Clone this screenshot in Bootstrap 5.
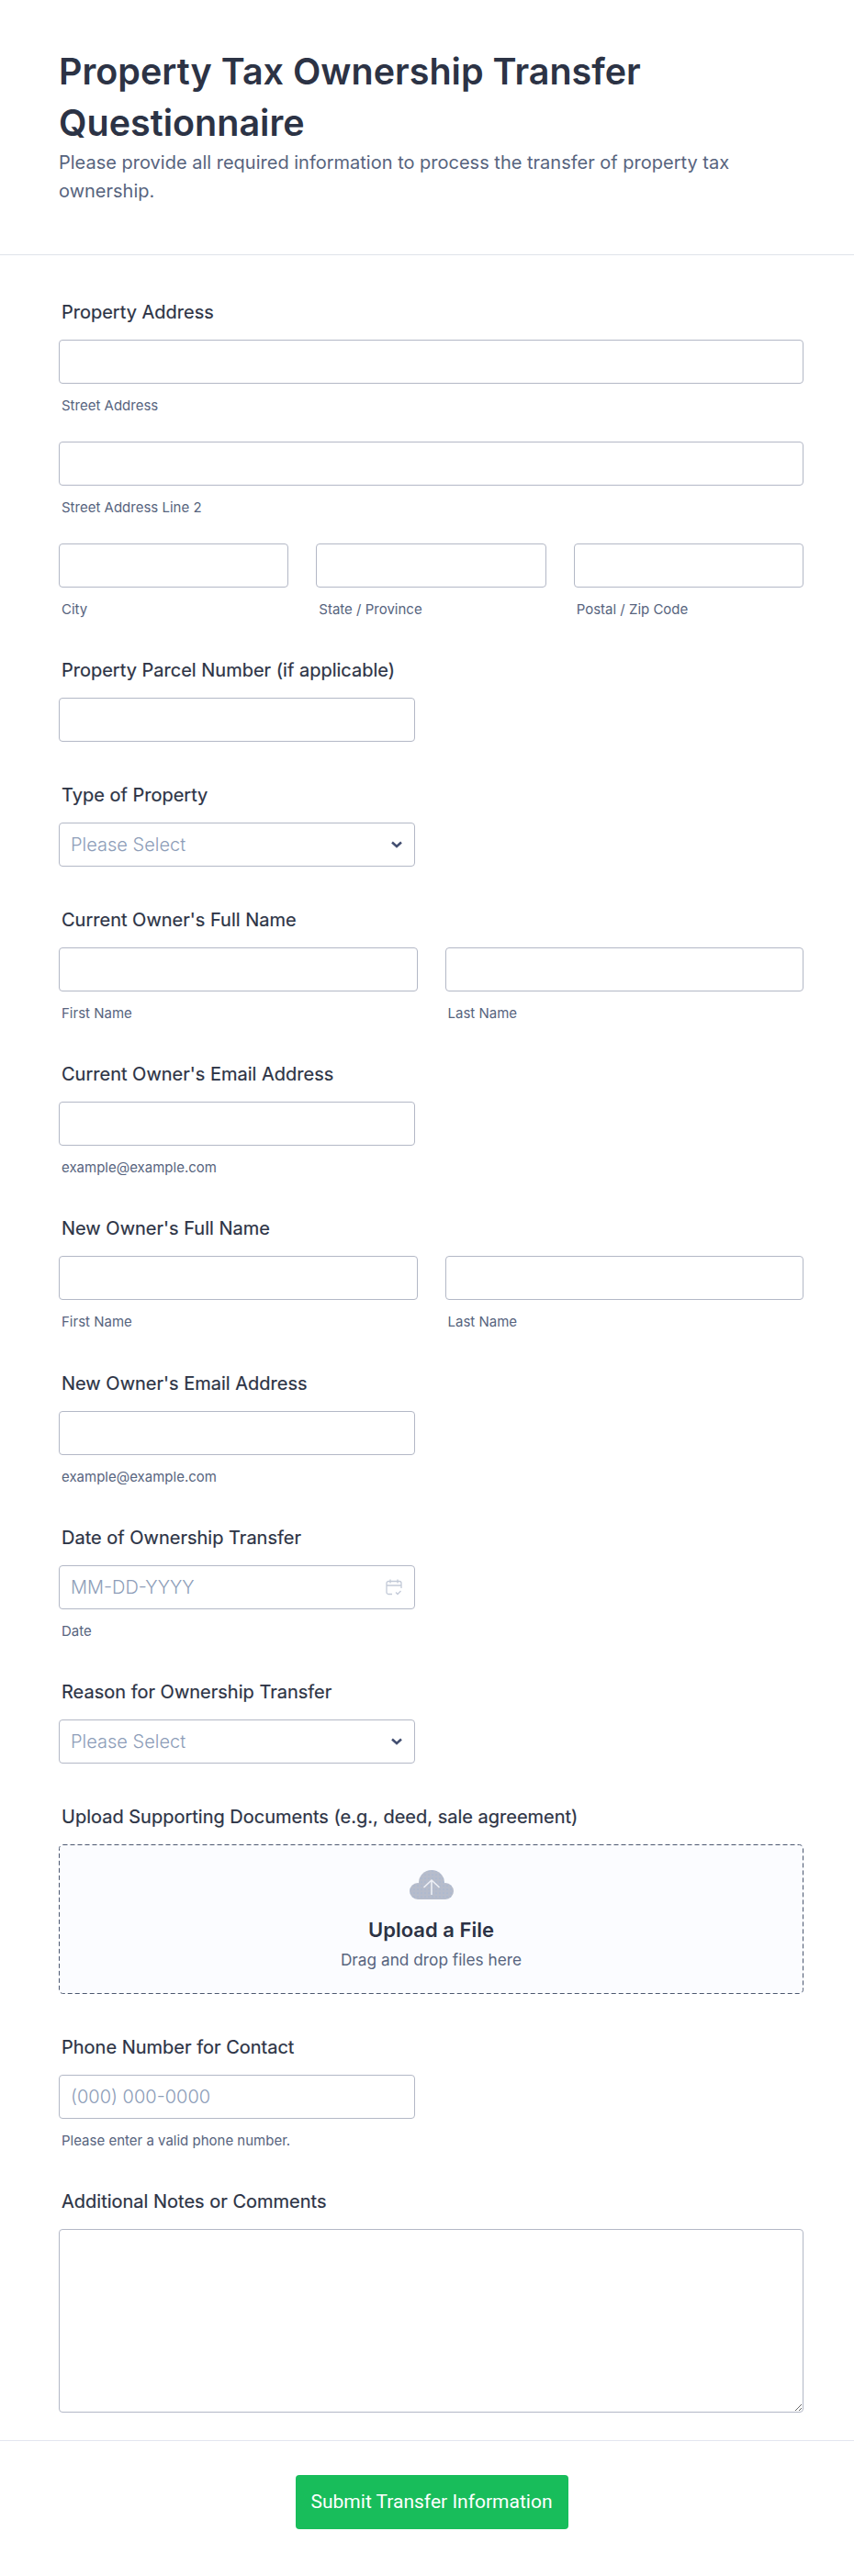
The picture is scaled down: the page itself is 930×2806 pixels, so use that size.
<!DOCTYPE html>
<html lang="en">
<head>
  <meta charset="UTF-8">
  <title>Property Tax Ownership Transfer Questionnaire</title>
  <meta name="viewport" content="width=device-width, initial-scale=1">
  <link href="https://cdn.jsdelivr.net/npm/bootstrap@5.3.0/dist/css/bootstrap.min.css" rel="stylesheet">
  <style>
    body {
      background-color: #fff;
      font-family: Inter, "Liberation Sans", sans-serif;
      color: #2c3345;
    }
    .form-head {
      padding: 50px 55px 53px 64px;
      border-bottom: 1px solid #dfe3ea;
    }
    .form-title {
      font-size: 39.5px;
      line-height: 56px;
      font-weight: 600;
      color: #2c3345;
      margin: 0;
    }
    .form-intro {
      font-size: 20px;
      line-height: 31px;
      color: #57647e;
      margin: 0;
    }
    .form-body {
      padding: 50px 55px 30px 64px;
    }
    .field-block {
      margin-bottom: 45.8px;
    }
    .field-label {
      display: block;
      margin: 0 0 18px 3px;
      font-size: 20px;
      line-height: 24px;
      font-weight: 400;
      color: #2c3345;
      -webkit-text-stroke: 0.2px #2c3345;
    }
    .field-input.form-control,
    .field-input.form-select {
      height: 48px;
      font-family: inherit;
      font-size: 20px;
      font-weight: 300;
      padding: 0 12px;
      color: #8d9db8;
      border: 1px solid #b3b8c6;
      border-radius: 4px;
      box-shadow: none;
    }
    .field-input.form-select {
      background-image: url("data:image/svg+xml,%3csvg xmlns='http://www.w3.org/2000/svg' viewBox='0 0 12 8'%3e%3cpath fill='none' stroke='%23434f71' stroke-width='2.5' d='M1 1.5l5 4.5 5-4.5'/%3e%3c/svg%3e");
      background-size: 12px 8px;
      background-position: right 13px center;
    }
    .field-input::placeholder {
      color: #8d9db8;
      opacity: 1;
    }
    .half-width {
      width: 388px;
    }
    .two-col, .third-col {
      flex-basis: 0;
    }
    .gap-30 {
      gap: 30px;
    }
    .field-note {
      display: block;
      margin: 16px 0 0 3px;
      font-size: 15px;
      line-height: 16.5px;
      color: #57647e;
    }
    .field-stack {
      margin-bottom: 30.5px;
    }
    .date-icon {
      position: absolute;
      top: 15px;
      right: 14px;
    }
    .upload-box {
      height: 163px;
      padding-top: 3px;
      border-radius: 4px;
      background-color: #fbfcff;
      background-image: url("data:image/svg+xml,%3csvg xmlns='http://www.w3.org/2000/svg' width='811' height='163'%3e%3crect x='.5' y='.5' width='810' height='162' rx='4' fill='none' stroke='%234c5870' stroke-dasharray='5 3'/%3e%3c/svg%3e");
      background-repeat: no-repeat;
    }
    .upload-title {
      font-size: 22px;
      line-height: 28px;
      font-weight: 600;
      color: #2c3345;
      margin-top: 19px;
    }
    .upload-hint {
      font-size: 17.25px;
      line-height: 24px;
      color: #57647e;
      margin-top: 7px;
    }
    .notes-area.form-control {
      height: 200px;
      border: 1px solid #b3b8c6;
      border-radius: 4px;
      box-shadow: none;
    }
    .form-foot {
      border-top: 1px solid #e3e5f0;
      padding: 37px 55px 30px 65px;
    }
    .send-btn.btn {
      width: 297px;
      height: 59px;
      font-family: Roboto, sans-serif;
      font-size: 21px;
      color: #fff;
      background-color: #18bd5b;
      border: 0;
      border-radius: 4px;
      padding: 0;
    }
  </style>
</head>
<body>

<div class="form-head">
  <h1 class="form-title">Property Tax Ownership Transfer Questionnaire</h1>
  <p class="form-intro">Please provide all required information to process the transfer of property tax ownership.</p>
</div>

<form class="form-body">
  <!-- Property address -->
  <div class="field-block">
    <label class="field-label">Property Address</label>
    <div class="field-stack">
      <input type="text" class="form-control field-input">
      <span class="field-note">Street Address</span>
    </div>
    <div class="field-stack">
      <input type="text" class="form-control field-input">
      <span class="field-note">Street Address Line 2</span>
    </div>
    <div class="d-flex gap-30">
      <div class="flex-fill third-col">
        <input type="text" class="form-control field-input">
        <span class="field-note">City</span>
      </div>
      <div class="flex-fill third-col">
        <input type="text" class="form-control field-input">
        <span class="field-note">State / Province</span>
      </div>
      <div class="flex-fill third-col">
        <input type="text" class="form-control field-input">
        <span class="field-note">Postal / Zip Code</span>
      </div>
    </div>
  </div>

  <div class="field-block">
    <label class="field-label">Property Parcel Number (if applicable)</label>
    <input type="text" class="form-control field-input half-width">
  </div>

  <div class="field-block">
    <label class="field-label">Type of Property</label>
    <select class="form-select field-input half-width"><option>Please Select</option></select>
  </div>

  <div class="field-block">
    <label class="field-label">Current Owner's Full Name</label>
    <div class="d-flex gap-30">
      <div class="flex-fill two-col">
        <input type="text" class="form-control field-input">
        <span class="field-note">First Name</span>
      </div>
      <div class="flex-fill two-col">
        <input type="text" class="form-control field-input">
        <span class="field-note">Last Name</span>
      </div>
    </div>
  </div>

  <div class="field-block">
    <label class="field-label">Current Owner's Email Address</label>
    <input type="email" class="form-control field-input half-width">
    <span class="field-note">example@example.com</span>
  </div>

  <div class="field-block">
    <label class="field-label">New Owner's Full Name</label>
    <div class="d-flex gap-30">
      <div class="flex-fill two-col">
        <input type="text" class="form-control field-input">
        <span class="field-note">First Name</span>
      </div>
      <div class="flex-fill two-col">
        <input type="text" class="form-control field-input">
        <span class="field-note">Last Name</span>
      </div>
    </div>
  </div>

  <div class="field-block">
    <label class="field-label">New Owner's Email Address</label>
    <input type="email" class="form-control field-input half-width">
    <span class="field-note">example@example.com</span>
  </div>

  <div class="field-block">
    <label class="field-label">Date of Ownership Transfer</label>
    <div class="position-relative half-width">
      <input type="text" class="form-control field-input" placeholder="MM-DD-YYYY">
      <svg class="date-icon" width="18" height="18" viewBox="0 0 18 18" fill="none" stroke="#c3cad8" stroke-width="1.3">
        <path d="M7 16.500H3a2 2 0 0 1-2-2V4.500a2 2 0 0 1 2-2h12a2 2 0 0 1 2 2V10"/>
        <path d="M1 7h16M5 .5v4M13 .5v4"/>
        <path d="M11 14.500l2 2 3.500-3.500"/>
      </svg>
    </div>
    <span class="field-note">Date</span>
  </div>

  <div class="field-block">
    <label class="field-label">Reason for Ownership Transfer</label>
    <select class="form-select field-input half-width"><option>Please Select</option></select>
  </div>

  <div class="field-block">
    <label class="field-label">Upload Supporting Documents (e.g., deed, sale agreement)</label>
    <div class="upload-box d-flex flex-column align-items-center justify-content-center">
      <svg width="48" height="32" viewBox="0 0 48 32">
        <defs>
          <pattern id="cloudDots" width="4" height="4" patternUnits="userSpaceOnUse">
            <rect width="4" height="4" fill="#b6bccb"/>
            <circle cx="1" cy="1" r=".5" fill="#8fb0de"/>
          </pattern>
        </defs>
        <g fill="url(#cloudDots)">
          <circle cx="24" cy="14" r="14"/>
          <circle cx="9" cy="23" r="9"/>
          <circle cx="39" cy="23" r="9"/>
          <rect x="9" y="18" width="30" height="14"/>
        </g>
        <path fill="none" stroke="#eef0f6" stroke-width="1.6" d="M24 27V11M15.500 19L24 11l8.500 8"/>
      </svg>
      <div class="upload-title">Upload a File</div>
      <div class="upload-hint">Drag and drop files here</div>
    </div>
  </div>

  <div class="field-block">
    <label class="field-label">Phone Number for Contact</label>
    <input type="tel" class="form-control field-input half-width" placeholder="(000) 000-0000">
    <span class="field-note">Please enter a valid phone number.</span>
  </div>

  <div class="field-block mb-0">
    <label class="field-label">Additional Notes or Comments</label>
    <textarea class="form-control notes-area"></textarea>
  </div>
</form>

<div class="form-foot text-center">
  <button type="submit" class="btn send-btn">Submit Transfer Information</button>
</div>

<script src="https://cdn.jsdelivr.net/npm/bootstrap@5.3.0/dist/js/bootstrap.bundle.min.js"></script>
</body>
</html>
